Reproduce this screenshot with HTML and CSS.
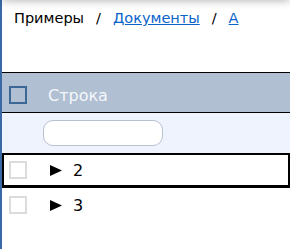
FILE: index.html
```html
<!DOCTYPE html>
<html lang="ru">
<head>
<meta charset="utf-8">
<link rel="stylesheet" href="styles.css">
</head>
<body>
<div class="page">
  <div class="topbar"></div>
  <nav class="crumbs">
    <span class="crumb">Примеры</span>
    <span class="sep">/</span>
    <a class="crumb link" href="#">Документы</a>
    <span class="sep">/</span>
    <a class="crumb link" href="#">А</a>
  </nav>
  <div class="grid">
    <div class="row head">
      <span class="cb cb-head"></span>
      <span class="title">Строка</span>
    </div>
    <div class="row filter">
      <span class="input"></span>
    </div>
    <div class="row item selected">
      <span class="cb"></span>
      <svg class="tri" width="12" height="11" viewBox="0 0 12 11"><path d="M0 0 L12 5.5 L0 11 Z" fill="#000"/></svg>
      <span class="val">2</span>
    </div>
    <div class="row item">
      <span class="cb"></span>
      <svg class="tri" width="12" height="11" viewBox="0 0 12 11"><path d="M0 0 L12 5.5 L0 11 Z" fill="#000"/></svg>
      <span class="val">3</span>
    </div>
  </div>
</div>
</body>
</html>
```
FILE: styles.css
```css
html, body {
  margin: 0;
  padding: 0;
  background: #ffffff;
  height: 100%;
  overflow: hidden;
}
.page {
  height: 100%;
  border-left: 2px solid #3a6aa5;
  font-family: "DejaVu Sans", Verdana, sans-serif;
  position: relative;
}
.topbar {
  position: absolute;
  left: 0;
  right: 0;
  top: -10px;
  height: 10px;
  box-shadow: 0 0 10px rgba(0,0,0,0.35);
}
.crumbs {
  display: flex;
  align-items: baseline;
  padding: 10px 0 0 12px;
  height: 72px;
  box-sizing: border-box;
  font-size: 14.5px;
  color: #000;
}
.sep {
  margin: 0 12px;
}
.link {
  color: #0a63c9;
  text-decoration: underline;
}
.grid {
  border-top: 1px solid #000;
}
.row {
  display: flex;
  align-items: center;
  box-sizing: border-box;
}
.head {
  height: 40px;
  padding-top: 5px;
  background: #b0bfd1;
  border-bottom: 1px solid #000;
}
.title {
  color: #f4f7fb;
  font-size: 16px;
  margin-left: 21px;
}
.cb {
  width: 18px;
  height: 18px;
  box-sizing: border-box;
  border: 2px solid #dcdcdc;
  margin-left: 7px;
  background: #fff;
  flex: none;
}
.cb-head {
  border-color: #3d6896;
  background: transparent;
}
.filter {
  height: 40px;
  background: #eef3fd;
  padding-left: 41px;
}
.input {
  width: 120px;
  height: 26px;
  box-sizing: border-box;
  border: 1px solid #b8c1d0;
  border-radius: 10px;
  background: #fff;
}
.item {
  height: 34px;
  font-size: 16px;
}
.selected {
  border: 2px solid #000;
  border-bottom-width: 3px;
  height: 35px;
}
.selected .cb {
  margin-left: 5px;
}
.tri {
  margin-left: 23px;
  flex: none;
}
.val {
  margin-left: 11px;
}
```
